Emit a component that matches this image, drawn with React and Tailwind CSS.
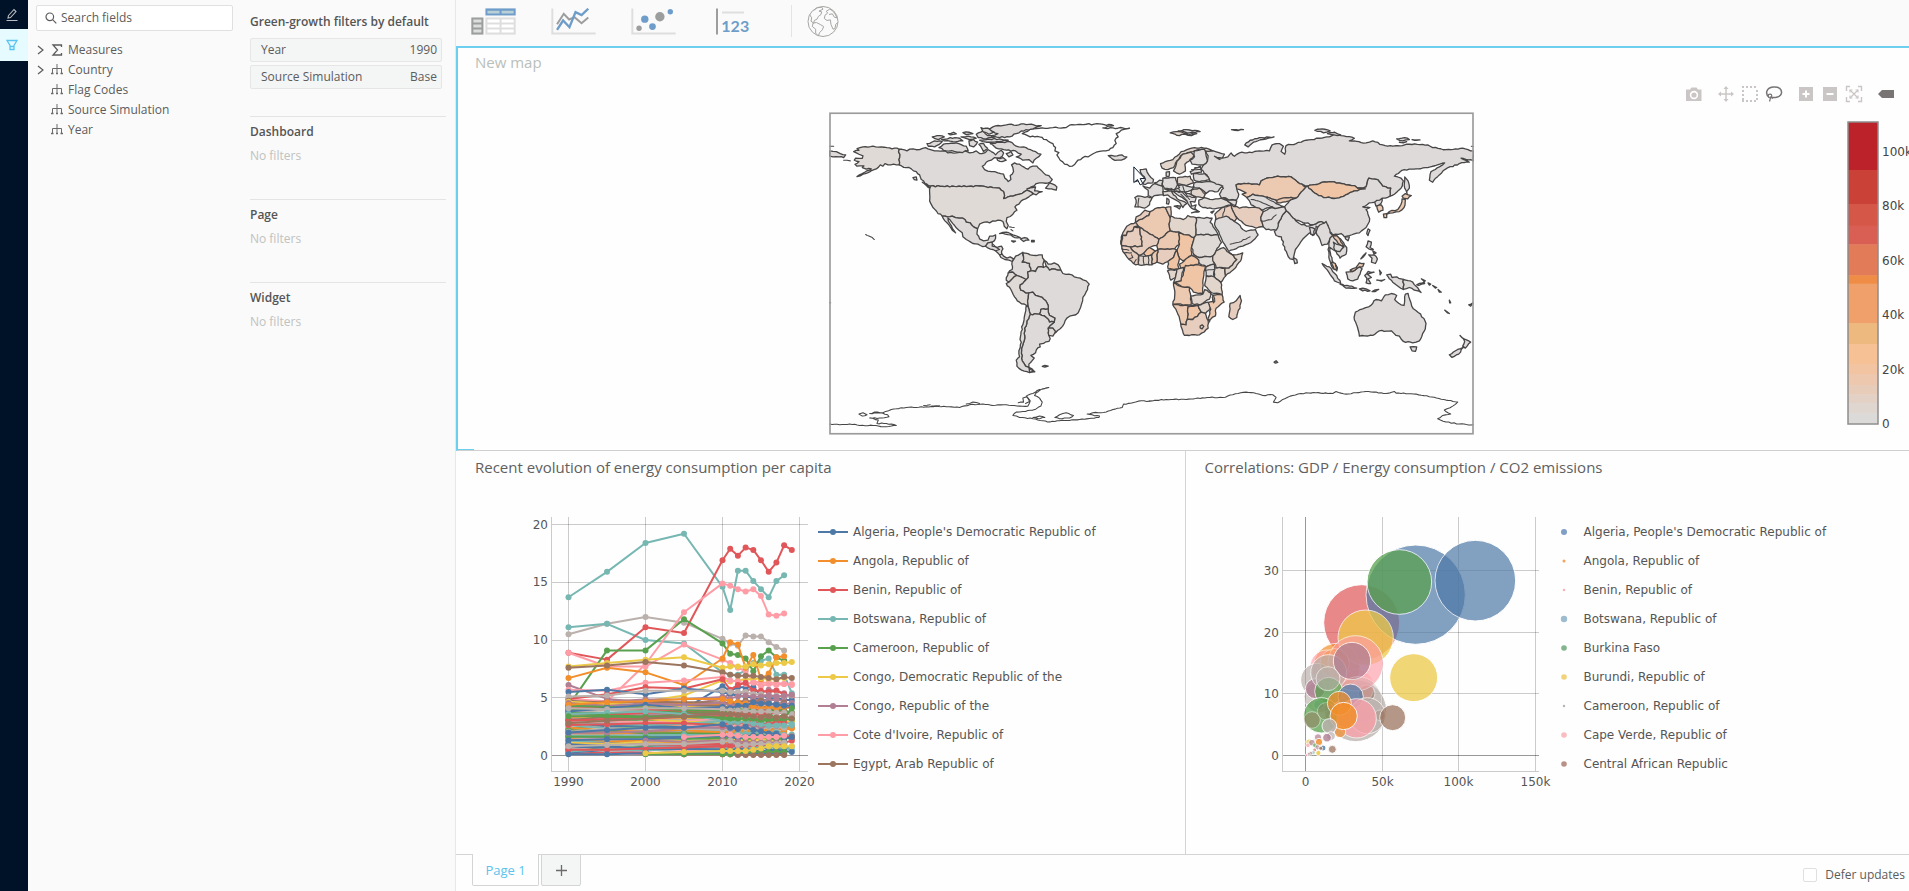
import React from "react";

/* ---------- world map ---------- */

const parse = (s) => s.trim().split(/\s+/).map((p) => p.split(",").map(Number));

// Adds coastline roughness; the offset depends only on the unordered pair of
// end points, so a border shared by two countries stays shared.
function rough(points, closed, amp) {
  const out = [];
  const n = points.length;
  const last = closed ? n : n - 1;
  for (let i = 0; i < last; i++) {
    const a = points[i];
    const b = points[(i + 1) % n];
    out.push(a);
    const flip = a[0] > b[0] || (a[0] === b[0] && a[1] > b[1]);
    const p = flip ? b : a;
    const q = flip ? a : b;
    const dx = q[0] - p[0];
    const dy = q[1] - p[1];
    const len = Math.hypot(dx, dy);
    const steps = Math.floor(len / 7);
    const mids = [];
    for (let k = 1; k < steps; k++) {
      const t = k / steps;
      const h = Math.sin(p[0] * 12.9 + p[1] * 78.2 + q[0] * 37.7 + q[1] * 11.3 + k * 91.7) * 43758.5;
      const o = (h - Math.floor(h) - 0.5) * 2 * amp;
      mids.push([p[0] + dx * t - (dy / len) * o, p[1] + dy * t + (dx / len) * o]);
    }
    if (flip) mids.reverse();
    out.push(...mids);
  }
  if (!closed) out.push(points[n - 1]);
  return out.map((p) => p[0].toFixed(1) + "," + p[1].toFixed(1)).join(" ");
}

const G = "#dddad9";
const A = "#dfdad6";
const B = "#e1d5cc";
const C = "#e7cdbe";
const D = "#ecc9b1";
const E = "#f0c5a5";

const WEST = [
  [A, "102,152 118,148 112,143 130,138 160,136 185,138 210,141 239,145 239,192 222,190 205,192 196,188 190,196 182,192 170,204 150,213 130,220 112,227 128,218 150,208 155,204 140,205 128,200 133,195 112,196 106,190 118,182 104,178 108,172 128,172 130,165 118,160"],
  [G, "30,150 50,152 62,158 78,162 72,170 58,168 40,168 30,166"],
  [G, "239,145 262,150 280,144 300,146 318,140 325,144 345,150 370,150 385,156 410,156 430,150 450,156 470,150 480,158 495,156 505,146 515,152 528,162 534,155 545,148 552,156 548,166 535,172 525,170 515,178 500,184 488,196 495,206 515,212 535,216 552,220 556,232 566,242 574,236 572,224 582,212 580,200 576,192 585,186 600,190 612,198 625,205 640,196 652,196 662,206 672,216 688,224 698,236 692,244 670,246 650,248 635,258 622,264 648,258 645,270 668,272 650,282 636,274 622,268 600,280 580,286 552,293 555,284 552,272 540,262 520,260 490,256 333,256 315,246 305,236 300,222 290,212 275,204 260,200 239,192"],
  [G, "678,262 690,246 700,250 712,258 710,268 696,264"],
  [G, "280,230 290,228 292,238 284,236"],
  [G, "308,244 322,250 338,262 326,260"],
  [A, "333,256 490,256 520,260 540,262 552,272 555,284 552,293 580,286 600,280 622,268 636,274 640,280 628,288 618,294 605,300 598,310 586,318 592,328 580,340 562,350 560,362 566,374 562,384 554,376 550,362 535,358 520,360 510,366 495,364 480,370 474,384 462,378 452,366 440,364 430,352 418,352 398,346 384,348 368,346 355,338 340,320 330,300 330,275"],
  [G, "368,346 384,348 398,346 418,352 430,352 440,364 452,366 462,378 474,384 472,400 480,414 492,420 505,418 510,406 528,402 528,412 518,424 505,426 498,436 482,434 460,428 440,416 430,408 428,396 418,388 405,374 395,362 385,352 386,360 396,376 408,396 398,388 388,372 376,360"],
  [G, "498,436 505,426 518,424 518,436 532,440 546,436 550,444 546,458 552,466 562,472 572,468 582,474 578,482 568,478 556,476 544,470 540,462 528,450 520,446 506,442"],
  [G, "540,398 560,394 580,402 602,410 585,410 565,401"],
  [G, "602,414 615,410 628,418 612,422"],
  [G, "636,419 644,419 644,423 636,423"],
  [G, "576,420 588,421 582,424"],
  [G, "578,482 588,466 604,458 610,454 612,468 608,484 630,488 634,510 624,514 626,530 620,545 604,528 592,524 580,514 566,516 578,506"],
  [A, "612,468 610,456 632,462 650,464 668,462 674,478 670,490 672,500 656,498 648,512 634,510 630,488 608,484"],
  [A, "566,516 580,514 592,524 578,534 568,544 560,538"],
  [A, "568,544 578,534 592,524 604,528 620,536 602,552 604,568 618,576 628,576 624,600 626,618 600,604 585,588 574,566 560,548"],
  [G, "674,478 686,490 704,486 716,492 724,508 714,508 698,504 690,508 680,496"],
  [G, "620,536 626,530 624,514 634,510 648,512 656,498 672,500 680,496 690,508 698,504 714,508 724,508 730,518 748,520 764,528 782,532 800,540 809,550 804,566 790,590 786,610 776,636 760,644 742,652 734,668 722,684 708,696 700,682 686,682 704,664 706,652 690,644 686,624 682,606 668,590 648,584 640,574 628,576 618,576 604,568 602,552"],
  [G, "628,576 640,574 648,584 668,590 682,606 686,624 664,626 660,640 632,640 626,618 624,600"],
  [G, "664,626 686,624 690,644 706,652 704,664 690,664 680,650 660,640"],
  [G, "632,640 660,640 680,650 690,664 704,664 686,682 688,704 692,714 688,722 672,728 660,730 662,738 650,748 648,756 634,764 644,772 636,782 628,790 628,800 618,796 608,780 606,750 614,720 616,690 622,660"],
  [A, "686,682 700,682 708,692 700,706 688,704"],
  [G, "626,618 632,640 622,660 616,690 614,720 606,750 608,780 618,796 628,800 644,812 630,816 606,808 592,796 590,778 600,768 598,750 602,740 604,700 614,650 620,615"],
  [G, "628,800 634,806 646,813 630,815"],
  [G, "668,797 676,794 686,796 676,799"],
  ["none", "640,84 660,82 700,80 740,80 750,73 800,70 840,69 882,74 850,81 895,82 930,82 905,88 890,98 896,108 886,118 890,128 880,140 868,148 850,150 830,154 812,164 790,170 775,178 766,190 758,196 735,190 722,178 712,162 718,155 706,150 708,140 700,128 680,116 660,108 632,108 608,98"],
  [G, "866,164 885,166 908,162 922,168 915,174 895,178 878,174"],
  [G, "505,86 520,78 560,72 620,71 665,74 640,84 605,90 590,98 570,108 540,110 515,104 535,98 520,92"],
  [G, "512,128 540,124 570,122 590,136 612,138 640,150 664,160 650,172 640,186 628,176 610,178 590,168 605,160 588,150 560,148 530,142"],
  [G, "358,140 380,128 410,126 440,136 446,150 420,154 380,150"],
  [G, "322,128 345,120 368,122 345,138 326,136"],
  [G, "448,120 462,116 474,124 462,138 450,134"],
  [G, "338,108 360,104 374,108 356,116"],
  [G, "366,116 392,110 420,112 430,120 400,122"],
  [G, "386,98 402,94 410,99 392,102"],
  [G, "430,95 448,94 460,98 440,101"],
  [G, "424,108 446,106 470,112 450,116"],
  [G, "470,100 490,90 504,104 526,108 500,114 476,110"],
  [G, "484,80 506,82 524,94 508,100 490,92"],
  [G, "480,118 500,116 540,114 566,118 540,122 500,124"],
  [G, "478,130 492,128 504,142 492,152"],
  [G, "532,172 550,170 560,178 548,182 534,178"],
  [G, "560,158 574,152 580,162 568,168"],
];

const EAST = [
  [G, "318,150 342,150 375,160 368,172 345,166 360,176 385,168 395,156 405,166 420,156 450,154 480,150 510,150 518,132 540,128 552,136 545,152 556,160 560,134 590,128 620,118 660,112 690,108 705,100 725,104 765,112 750,120 800,126 820,120 850,132 880,136 930,130 985,132 1000,140 1040,146 1090,142 1122,150 1122,180 1085,172 1110,184 1080,188 1040,204 1020,222 1000,244 990,238 995,212 1020,198 1036,186 985,200 950,204 915,206 885,226 905,232 912,240 905,262 885,280 872,286 874,262 850,256 835,236 808,232 800,258 775,262 765,254 740,252 690,242 660,248 625,256 600,248 575,228 535,226 510,230 485,240 480,252 440,248 410,252 412,264 418,280 412,296 390,298 365,290 360,280 372,262 345,248 330,238 322,222 305,205 312,192 324,180 326,165"],
  [D, "410,252 440,248 480,252 485,240 510,230 535,226 575,228 600,248 620,258 600,280 590,292 560,290 540,300 490,286 460,280 442,290 428,280 440,276 428,270 412,264"],
  [G, "442,290 460,280 490,286 540,300 530,308 555,318 535,322 510,320 490,328 455,312 450,300"],
  [D, "530,300 560,290 590,292 570,300 550,304 536,306"],
  [E, "625,256 660,248 690,242 740,252 765,254 775,262 798,264 765,270 745,280 712,292 672,290 640,272"],
  [G, "625,256 640,272 672,290 712,292 745,280 765,270 798,264 775,262 800,258 808,232 835,236 850,256 874,262 872,286 850,292 838,302 810,306 790,318 812,320 800,326 808,346 810,362 800,380 780,396 750,404 735,408 725,398 700,402 690,392 685,372 665,362 640,372 610,370 590,360 575,345 560,330 555,318 570,300 590,292 600,280 620,258"],
  [G, "540,360 560,330 575,345 590,360 610,370 640,372 665,362 680,368 665,384 650,376 650,394 640,404 630,396 615,410 600,430 588,446 582,476 572,474 556,446 546,408 530,404 525,392"],
  ["#fdfdfd", "588,358 604,362 640,372 628,376 600,368"],
  [G, "630,380 646,384 644,402 634,400"],
  [G, "650,394 656,378 680,362 688,380 692,396 700,404 692,412 684,430 668,434 658,408"],
  [G, "692,412 706,402 728,420 742,440 740,460 722,472 710,452 700,446 692,440 694,464 702,486 714,500 712,510 700,502 690,476 686,446"],
  [D, "700,406 712,404 730,430 734,438 722,432 712,420"],
  [D, "694,484 708,488 714,504 704,506"],
  [G, "702,424 720,432 732,440 722,452 706,448"],
  [G, "738,408 750,408 746,420 738,414"],
  [G, "806,384 812,388 806,404 802,398"],
  [G, "806,420 816,424 812,440 822,446 808,444 800,438"],
  [G, "808,462 824,462 834,474 828,488 816,484 818,472"],
  [G, "820,450 830,456 824,460"],
  [G, "784,474 792,464 800,456 790,470"],
  [G, "740,514 760,512 780,498 788,504 782,520 775,535 760,540 745,534"],
  [D, "752,508 770,500 780,486 794,488 790,498 780,498 760,512"],
  [G, "668,488 690,498 712,524 724,548 705,540 688,514"],
  [G, "722,550 750,556 772,562 740,562"],
  [G, "780,564 800,564 812,570 790,570"],
  [G, "818,572 838,566 828,572"],
  [G, "796,524 806,512 824,514 804,520 816,530 806,534 814,548 800,546 802,532"],
  [G, "840,508 846,516 842,522"],
  [G, "832,538 856,536 846,541"],
  [G, "862,522 874,520 878,530 892,528 912,536 912,566 890,552 880,544 870,534"],
  [G, "912,536 940,544 950,556 965,575 945,568 930,560 912,566"],
  [G, "952,552 970,546 978,540 966,534 976,548 958,554"],
  [G, "986,546 994,550 990,553"],
  [G, "1000,554 1012,560 1008,562"],
  [G, "1016,566 1026,574 1020,574"],
  [G, "1050,598 1054,606 1051,606"],
  [G, "1036,628 1050,638 1044,636"],
  [G, "1108,612 1121,606 1114,616"],
  [G, "768,634 790,624 808,618 830,596 846,600 858,582 876,578 892,584 886,596 905,612 914,614 918,580 926,578 932,598 942,624 964,640 980,668 974,692 960,720 940,726 912,722 900,706 890,704 876,690 840,690 820,704 780,706 776,686 764,650"],
  [G, "932,738 952,738 948,752 938,750"],
  [G, "1082,704 1098,716 1114,724 1098,742 1090,736 1096,722"],
  [G, "1092,740 1078,760 1058,770 1050,762 1075,746"],
  [G, "916,228 926,240 930,262 922,272 924,284 916,262"],
  [D, "908,286 918,278 936,284 925,294 912,292"],
  [D, "862,340 870,332 895,326 905,310 908,294 918,296 914,320 900,332 880,336"],
  [D, "852,340 862,338 862,350 854,350"],
  [G, "826,304 848,292 846,306 838,314 830,316"],
  [D, "832,316 846,312 851,328 838,334"],
  [C, "395,312 420,322 440,318 480,322 492,332 484,350 492,378 470,382 450,376 432,368 412,350 400,330"],
  [G, "484,350 492,332 510,322 535,322 555,318 560,330 540,360 530,388 500,386 492,378"],
  [G, "350,348 380,346 405,362 422,374 430,386 440,392 468,386 476,402 460,420 430,436 388,452 375,430 360,400 345,370"],
  [C, "365,322 395,312 400,330 412,352 405,362 380,346 350,356 346,340"],
  [A, "298,298 315,290 340,296 365,292 390,300 395,312 365,320 345,324 310,320 298,310"],
  [G, "372,290 392,298 412,300 408,314 392,306"],
  [B, "212,345 232,352 252,356 265,344 290,350 290,402 284,410 238,394 212,390 208,370"],
  [G, "290,350 338,352 332,364 346,384 356,402 290,402"],
  [C, "108,364 110,348 128,336 136,328 152,332 148,344"],
  [C, "64,430 68,402 82,376 108,364 118,378 104,378 100,390 84,392 80,404 68,404"],
  [D, "152,332 175,320 198,320 206,338 212,350 208,370 212,390 178,416 122,380 108,364 148,344"],
  [C, "198,320 214,318 215,332 212,350 206,338"],
  [C, "68,404 80,404 84,392 100,390 104,378 122,380 128,436 92,438 66,434"],
  [C, "122,380 178,416 172,434 150,440 135,456 118,464 100,450 92,438 128,436"],
  [D, "178,416 212,390 238,394 240,430 225,444 175,446 172,434"],
  [E, "238,394 284,410 276,440 276,464 250,480 240,472 232,448 240,430"],
  [A, "290,402 356,402 366,425 350,450 340,466 300,470 284,462 276,440 284,410"],
  [A, "284,462 300,470 340,466 345,490 320,498 300,488 276,464"],
  [B, "350,450 372,440 390,456 412,476 388,502 350,500 340,480 340,466"],
  [B, "390,456 404,462 430,456 426,474 405,504 378,526 376,502 388,502 412,476"],
  [B, "344,500 376,502 378,526 364,545 344,528"],
  [G, "320,498 345,490 344,528 320,524"],
  [C, "175,446 225,444 232,448 222,470 205,482 190,490 172,484"],
  [E, "132,458 150,440 172,452 155,462 140,466"],
  [C, "66,434 92,438 100,450 118,464 118,490 108,492 95,480 82,468 70,452"],
  [B, "118,464 140,466 158,462 158,492 118,492"],
  [D, "158,460 175,446 172,484 158,490"],
  [E, "232,448 240,472 235,492 240,506 206,504 205,482 222,470"],
  [E, "240,490 276,464 298,478 298,490 265,496 245,504"],
  [B, "204,510 232,506 228,530 214,538"],
  [B, "232,506 252,500 245,540 222,546 228,530"],
  [E, "258,494 298,492 318,496 312,530 310,578 282,574 270,560 248,558 226,546 245,540 252,515"],
  [B, "320,526 344,528 364,545 368,582 335,575 316,555"],
  [D, "222,546 248,558 270,560 274,586 275,612 220,610 226,580"],
  [B, "274,586 310,580 316,566 335,575 330,595 300,612 278,608"],
  [D, "340,583 368,582 374,604 350,622 348,645 326,660 334,625 324,606 340,602"],
  [D, "220,612 296,614 266,618 264,655 260,672 244,670 235,640"],
  [E, "266,618 296,614 305,634 280,656 264,655"],
  [B, "296,614 326,604 332,622 318,638 305,634"],
  [C, "244,670 260,672 264,655 280,656 305,634 318,638 326,660 326,682 300,702 255,704"],
  [B, "302,676 308,672 313,677 308,684 302,681"],
  [C, "422,584 426,600 412,650 400,656 388,648 392,608 410,600"],
  [G, "582,470 592,476 594,486 586,488"],
  [B, "183,188 220,176 245,152 285,140 320,142 340,150 318,150 296,146 280,152 250,160 232,180 222,200 205,206 188,202"],
  [B, "250,160 275,154 284,164 256,190 258,210 240,220 222,210 232,182"],
  [G, "285,150 315,145 324,180 312,192 278,190 272,178 285,168"],
  [G, "122,206 140,204 148,222 162,236 160,246 130,250 138,236 128,222"],
  [G, "106,230 118,226 120,238 108,242"],
  [A, "106,290 115,285 158,290 150,312 135,322 106,318 110,306"],
  [G, "130,255 150,262 165,248 188,254 192,282 165,284 158,290 146,284 146,268"],
  [G, "165,246 180,238 192,240 188,256 176,252"],
  [G, "190,232 228,230 234,252 225,266 195,262 188,250"],
  [G, "200,214 210,212 208,228 200,226"],
  [B, "234,230 272,226 282,246 260,254 234,248"],
  [G, "272,212 302,196 306,214 276,220"],
  [G, "282,218 316,218 330,236 300,242 284,238"],
  [G, "284,246 330,242 370,256 355,272 330,270 320,278 300,262 282,260"],
  [G, "195,264 225,266 240,260 234,250 262,256 284,258 276,268 256,274 240,272 210,272"],
  [B, "276,268 300,262 318,276 312,290 290,288 276,282"],
  [G, "222,272 256,274 276,282 290,290 286,304 272,302 276,316 290,312 286,322 298,332 276,322 262,300 240,286"],
  [A, "190,272 215,270 222,282 240,298 262,308 250,320 240,304 218,292 205,282 192,284"],
  [A, "224,316 244,316 240,324"],
  [A, "202,292 208,296 207,310 201,308"],
  [G, "276,336 300,332 296,334"],
  [G, "334,334 344,330 338,337"],
  [B, "212,96 232,92 262,96 240,104"],
  [G, "236,90 262,86 302,92 270,96"],
  [G, "256,100 292,98 276,104"],
  [G, "396,86 432,86 416,89"],
  [G, "436,132 452,118 480,110 524,108 490,116 462,124 446,138"],
  [G, "646,88 668,84 692,90 672,96"],
  [G, "684,98 706,94 724,102 704,102"],
  [G, "892,114 916,110 930,116 910,120"],
  [G, "938,116 962,117 950,118"],
  [G, "900,124 922,122 912,126"],
  [G, "524,784 530,780 535,785 528,787"],
];

const WEST_LINES = [
  "30,970 60,972 90,970 120,974 160,974 200,978 230,974 200,968 172,968 176,958 150,952 180,952 208,948 204,942 180,936 150,938 165,934 190,936 215,926 260,920 320,918 350,916 380,918 420,920 450,912 490,910 520,914 560,912 600,916 625,916 632,900 620,886 640,878 660,866 688,860 670,864 650,876 645,884 660,892 668,904 664,916 640,928 610,932 590,934 580,944 600,950 640,954 670,960 684,964 720,960 780,956 838,950 840,946 803,940 820,936 860,934 880,926 908,920 912,910 940,906 965,900 990,901",
  "118,940 130,936 142,942 128,946 118,940",
  "706,950 720,942 740,936 762,944 750,952 720,954 706,950",
  "640,950 660,946 676,950 655,954 640,950",
  "596,906 612,904 610,892 622,888 630,902 618,908",
  "440,910 460,904 480,908",
  "312,914 332,912",
  "336,916 360,915",
  "138,401 143,404",
  "146,405 158,410 164,416",
  "30,136 42,136",
  "30,606 33,606",
  "570,378 584,380",
  "574,386 580,390",
  "72,178 92,180",
  "520,430 540,446 528,450",
  "548,460 540,462",
];

const EAST_LINES = [
  "150,901 200,896 260,896 330,890 370,890 400,882 440,874 470,878 490,884 520,882 530,890 522,904 535,906 550,896 580,884 620,876 700,878 710,872 740,880 800,872 860,878 885,872 890,877 950,880 990,888 1040,898 1075,904 1060,916 1035,928 1054,940 1030,944 1015,954 1040,964 1080,970 1122,972",
  "118,292 116,318",
  "132,466 134,492",
  "146,464 148,492",
  "96,462 100,470 90,474",
  "110,476 104,486",
  "66,444 88,448",
  "74,456 96,456",
  "392,430 418,424 452,408",
  "530,342 516,356 498,360 484,360",
  "455,296 476,300 500,310 520,318",
  "500,290 515,300 530,308",
  "236,262 250,276 262,288",
  "250,256 256,274 270,296",
  "262,286 286,290",
  "244,280 262,300",
  "276,206 304,206",
  "286,200 304,198",
  "214,262 226,270",
  "330,574 342,584 346,602 342,606 338,590",
  "320,508 344,506",
  "326,656 332,660 328,666",
  "376,322 370,346",
  "300,262 316,280",
  "1116,136 1122,137",
];

function WorldMap() {
  return (
    <svg viewBox="28 34 1936 968" className="block h-[323px] w-[645px] shrink-0" role="img" aria-label="World map">
      <g stroke="#474545" strokeWidth="3.9" strokeLinejoin="round" strokeLinecap="round">
        <g>
          {WEST.map(([fill, pts], i) => (
            <polygon key={i} fill={fill} points={rough(parse(pts), true, 2.4)} />
          ))}
          {WEST_LINES.map((pts, i) => (
            <polyline key={i} fill="none" strokeWidth="3.2" points={rough(parse(pts), false, 1.4)} />
          ))}
        </g>
        <g transform="translate(840 0)">
          {EAST.map(([fill, pts], i) => (
            <polygon key={i} fill={fill} points={rough(parse(pts), true, 2)} />
          ))}
          {EAST_LINES.map((pts, i) => (
            <polyline key={i} fill="none" strokeWidth="3.2" points={rough(parse(pts), false, 1.4)} />
          ))}
        </g>
      </g>
      <rect x="31" y="37" width="1930" height="962" fill="none" stroke="#9b9b9b" strokeWidth="5" />
      <path
        transform="translate(943 198)"
        d="M0 0V47L11 38L19 54L27 50L19 35H33Z"
        fill="#fff"
        stroke="#0b1a2e"
        strokeWidth="3"
      />
    </svg>
  );
}

/* ---------- palette ---------- */

const BLUE = "#4e79a7";
const ORANGE = "#f28e2b";
const RED = "#e15759";
const TEAL = "#76b7b2";
const GREEN = "#59a14f";
const YELLOW = "#edc948";
const MAUVE = "#b07f93";
const PINK = "#ff9da7";
const BROWN = "#9c755f";
const GREY = "#bab0ac";
const PALETTE = [BLUE, ORANGE, RED, TEAL, GREEN, YELLOW, MAUVE, PINK, BROWN, GREY];

/* ---------- line chart ---------- */

const YEARS = [1990, 1995, 2000, 2005, 2010, 2011, 2012, 2013, 2014, 2015, 2016, 2017, 2018, 2019];

const SERIES = [
  [TEAL, [13.7, 15.9, 18.4, 19.2, 14.6, 12.6, 16.0, 16.0, 15.1, 14.4, 13.7, 15.1, 15.6]],
  [GREY, [10.5, 11.4, 12.0, 11.5, 10.1, 9.7, 9.5, 10.4, 10.3, 10.3, 9.8, 9.4, 9.1]],
  [TEAL, [11.1, 11.4, 10.0, 9.7, 7.2, 7.0, 7.0, 7.4, 8.0, 8.2, 8.4, 7.0, 7.0, 5.4]],
  [RED, [8.9, 8.3, 11.1, 10.6, 16.9, 17.9, 17.3, 18.0, 17.8, 16.9, 15.9, 16.7, 18.2, 17.8]],
  [PINK, [8.9, 7.7, 7.7, 9.6, 8.3, 8.0, 7.6, 7.3, 6.4, 6.3, 6.3, 6.3, 6.2, 6.2]],
  [GREEN, [4.3, 9.1, 9.1, 11.8, 9.7, 8.8, 8.7, 8.4, 7.3, 8.6, 9.1, 8.5, 8.2]],
  [PINK, [4.9, 4.7, 7.9, 12.4, 14.9, 14.7, 14.4, 14.2, 14.4, 13.8, 12.2, 12.1, 12.3]],
  [ORANGE, [6.7, 7.6, 7.2, 6.1, 8.4, 9.8, 9.6, 7.6, 8.7, 6.6, 7.1, 8.5, 8.6]],
  [YELLOW, [3.2, 4.5, 4.7, 5.2, 6.5, 6.4, 6.5, 6.6, 6.6, 6.7, 6.6, 6.6, 6.7]],
  [YELLOW, [7.7, 8.0, 8.3, 8.5, 7.6, 7.7, 7.7, 7.7, 7.9, 7.8, 7.9, 8.0, 8.0, 8.1]],
  [BROWN, [7.6, 7.8, 8.1, 7.8, 7.2, 7.0, 6.9, 6.9, 6.9, 6.8, 6.7, 6.6, 6.8, 6.7]],
  [MAUVE, [6.1, 4.9, 4.6, 4.4, 4.9, 5.4, 5.2, 5.6, 5.8, 5.4, 5.7, 5.6, 5.4]],
  [BLUE, [3.9, 4.0, 4.2, 4.0, 6.0, 5.6, 5.9, 5.9, 5.9, 5.2, 5.0, 4.9, 4.9]],
  [PINK, [5.7, 5.6, 6.3, 6.5, 6.8, 6.5, 6.4, 6.2, 6.3, 6.0, 6.2, 6.1, 6.2, 6.1]],
  [RED, [4.9, 5.3, 5.9, 5.8, 6.6, 5.7, 6.1, 6.3, 5.6, 5.6, 5.5, 5.6, 5.3, 5.1]],
  [BLUE, [5.5, 5.7, 5.3, 5.8, 5.5, 5.3, 5.2, 5.1, 5.0, 4.8, 4.8, 4.9, 4.8, 4.8]],
  [GREY, [5.1, 5.2, 5.6, 5.6, 5.6, 5.5, 5.5, 5.5, 5.3, 5.3, 5.2, 5.2, 5.1, 5.2]],
];

// Low-consumption countries, packed between 0 and 5.
const BAND_ORDER = [1, 2, 9, 3, 8, 0, 4, 6, 7, 5];
for (let i = 0; i < 78; i++) {
  const r = (k) => {
    const h = Math.sin((i + 1) * 127.1 + k * 311.7) * 43758.5453;
    return h - Math.floor(h);
  };
  const base = 0.25 + ((i * 29) % 78) * 0.057;
  const color = PALETTE[BAND_ORDER[(i * 7 + Math.floor(r(0) * 5)) % 10]];
  const slope = (r(1) - 0.5) * 1.5;
  SERIES.push([
    color,
    YEARS.slice(0, r(2) > 0.65 ? 14 : 13).map((y, k) =>
      Math.max(0.1, base + (slope * (y - 1990)) / 29 + (r(k + 5) - 0.5) * 0.3)
    ),
  ]);
}
SERIES.push(
  [ORANGE, [4.4, 4.6, 4.7, 4.9, 4.9, 4.7, 4.6, 4.5, 4.2, 4.1, 4.2, 4.1, 4.2]],
  [BLUE, [3.8, 4.1, 4.4, 4.1, 4.2, 4.1, 4.3, 4.3, 4.6, 4.5, 4.5, 4.4, 4.3, 4.3]],
  [GREY, [4.1, 4.0, 4.1, 4.1, 4.0, 3.9, 3.9, 3.9, 3.8, 3.8, 3.8, 3.7, 3.7, 3.6]],
  [TEAL, [3.6, 3.7, 3.8, 3.6, 3.0, 2.9, 2.9, 2.9, 2.8, 2.7, 2.6, 2.6, 2.6, 2.6]],
  [GREEN, [3.4, 3.4, 3.3, 3.4, 3.3, 3.2, 3.2, 3.2, 3.2, 3.1, 3.2, 3.2, 3.2, 4.1]],
  [BROWN, [2.8, 3.0, 3.2, 3.4, 3.6, 3.6, 3.5, 3.4, 3.4, 3.3, 3.4, 3.3, 3.4, 3.2]],
  [BLUE, [2.0, 2.2, 2.4, 2.4, 2.7, 2.4, 2.3, 2.5, 2.2, 2.1, 1.9, 1.9, 1.6]],
  [MAUVE, [null, null, 1.3, 1.2, 1.3, 1.3, 1.2, 1.1, 1.1, 1.1, 1.1, 1.1, 1.0]],
  [PINK, [null, null, null, 1.6, 1.8, 1.8, 1.7, 1.6, 1.6, 1.6, 1.6, 1.6, 1.7]],
  [RED, [0.5, 0.5, 0.6, 0.7, 0.8, 0.8, 0.8, 0.8, 0.9, 0.9, 1.0, 1.0, 1.0]],
  [GREY, [0.8, 0.9, 1.0, 1.0, 1.2, 1.3, 0.9, 0.9, 1.0, 1.0, 1.0, 1.0, 1.1]],
  [BLUE, [0.1, 0.1, 0.2, 0.2, 0.2, 0.2, 0.2, 0.2, 0.2, 0.2, 0.2, 0.2, 0.2]],
  [GREEN, [null, null, 0.1, 0.1, 0.1, 0.1, 0.2, 0.3, 0.3, 0.3, 0.3, 0.3, 0.3]],
  [BROWN, [null, null, null, null, null, null, 0.05, 0.05, 0.05, 0.05, 0.05, 0.05, 0.05]],
  [YELLOW, [null, null, 0.2, 0.3, 0.4, 0.4, 0.4, 0.4, 0.5, 0.6, 0.8, 0.8, 0.8, 0.8]]
);

const lineX = (year) => 38.5 + (year - 1990) * 7.7;
const lineY = (v) => 255.5 - v * 11.55;

function LineChart() {
  return (
    <svg width="288" height="300" className="block shrink-0" role="img" aria-label="Energy consumption per capita over time">
      <g stroke="#000" strokeOpacity="0.2" shapeRendering="crispEdges">
        {[1990, 2000, 2010, 2020].map((y) => (
          <line key={y} x1={lineX(y)} x2={lineX(y)} y1="17" y2="271" />
        ))}
        {[5, 10, 15, 20].map((v) => (
          <line key={v} x1="22" x2="278" y1={lineY(v)} y2={lineY(v)} />
        ))}
        <line x1="21.5" x2="21.5" y1="17" y2="271" />
        <line x1="21" x2="278" y1="271.5" y2="271.5" />
        <line x1="22" x2="278" y1="255.5" y2="255.5" strokeOpacity="0.4" />
      </g>
      {SERIES.map(([color, values], i) => {
        const pts = values
          .map((v, k) => (v === null ? null : [lineX(YEARS[k]), lineY(v)]))
          .filter(Boolean);
        return (
          <g key={i}>
            <polyline
              fill="none"
              stroke={color}
              strokeWidth="2"
              strokeLinejoin="round"
              points={pts.map((p) => p.join(",")).join(" ")}
            />
            {pts.map((p, k) => (
              <circle key={k} cx={p[0]} cy={p[1]} r="3" fill={color} />
            ))}
          </g>
        );
      })}
      <g fill="#555" fontSize="12" className="font-['DejaVu_Sans',sans-serif]">
        {[0, 5, 10, 15, 20].map((v) => (
          <text key={v} x="18" y={lineY(v) + 4} textAnchor="end">{v}</text>
        ))}
        {[1990, 2000, 2010, 2020].map((y) => (
          <text key={y} x={lineX(y)} y="286" textAnchor="middle">{y}</text>
        ))}
      </g>
    </svg>
  );
}

/* ---------- bubble chart ---------- */

// [x, y, radius, colour, opacity] in thirds of a pixel
const BUBBLES = [
  [335, 368, 114, RED, 0.7],
  [497, 284, 149, BLUE, 0.7],
  [317, 632, 93, GREY, 0.75],
  [448, 246, 97, GREEN, 0.75],
  [676, 242, 121, BLUE, 0.7],
  [260, 500, 70, ORANGE, 0.7],
  [230, 500, 50, PINK, 0.6],
  [202, 540, 50, GREY, 0.7],
  [210, 590, 48, GREY, 0.6],
  [196, 566, 30, MAUVE, 0.8],
  [350, 580, 25, BROWN, 0.8],
  [320, 560, 52, PINK, 0.4],
  [347, 413, 83, YELLOW, 0.75],
  [317, 490, 83, PINK, 0.65],
  [254, 490, 44, ORANGE, 0.35],
  [236, 518, 54, GREY, 0.7],
  [306, 483, 56, MAUVE, 0.75],
  [491, 533, 72, YELLOW, 0.75],
  [325, 600, 70, GREY, 0.3],
  [236, 574, 42, GREEN, 0.7],
  [234, 536, 36, GREY, 0.6],
  [302, 590, 38, BLUE, 0.7],
  [352, 647, 54, GREY, 0.7],
  [390, 646, 16, BROWN, 0.3],
  [206, 614, 15, TEAL, 0.6],
  [214, 646, 53, GREEN, 0.75],
  [186, 660, 25, BROWN, 0.45],
  [228, 634, 26, BROWN, 0.35],
  [320, 655, 59, PINK, 0.7],
  [268, 610, 36, ORANGE, 0.75],
  [270, 696, 17, ORANGE, 0.7],
  [281, 648, 41, ORANGE, 0.85],
  [428, 653, 39, BROWN, 0.75],
  [238, 678, 22, GREY, 0.85],
  [243, 708, 13, GREY, 0.7],
  [231, 713, 13, MAUVE, 0.8],
  [204, 712, 11, MAUVE, 0.7],
  [176, 726, 9, YELLOW, 0.7],
  [174, 736, 7, PINK, 0.7],
  [186, 728, 10, MAUVE, 0.7],
  [196, 736, 8, GREEN, 0.7],
  [207, 726, 11, ORANGE, 0.85],
  [203, 742, 8, MAUVE, 0.6],
  [219, 744, 9, BLUE, 0.8],
  [212, 745, 6, BROWN, 0.8],
  [247, 748, 12, BROWN, 0.75],
  [205, 759, 8, YELLOW, 0.85],
  [194, 750, 6, RED, 0.6],
  [190, 758, 6, TEAL, 0.6],
  [182, 760, 6, BROWN, 0.6],
  [176, 762, 5, MAUVE, 0.6],
  [170, 765, 4, PINK, 0.7],
];

function BubbleChart() {
  return (
    <svg width="302" height="300" className="block shrink-0" role="img" aria-label="GDP, energy consumption and CO2 emissions">
      <g stroke="#000" strokeOpacity="0.2" shapeRendering="crispEdges">
        {[132.5, 208.5, 285.5].map((x) => (
          <line key={x} x1={x} x2={x} y1="17" y2="271" />
        ))}
        {[70.5, 132.5, 193.5].map((y) => (
          <line key={y} x1="33" x2="289" y1={y} y2={y} />
        ))}
        <line x1="32.5" x2="32.5" y1="17" y2="271" />
        <line x1="32" x2="289" y1="271.5" y2="271.5" />
        <line x1="33" x2="289" y1="255.5" y2="255.5" strokeOpacity="0.4" />
        <line x1="55.5" x2="55.5" y1="17" y2="271" strokeOpacity="0.4" />
      </g>
      {BUBBLES.map(([x, y, r, color, o], i) => (
        <circle key={i} cx={x / 3} cy={y / 3} r={r / 3} fill={color} stroke="#fff" strokeWidth="1" opacity={o} />
      ))}
      <g fill="#555" fontSize="12" className="font-['DejaVu_Sans',sans-serif]">
        {[[0, 255.5], [10, 193.5], [20, 132.5], [30, 70.5]].map(([v, y]) => (
          <text key={v} x="29" y={y + 4} textAnchor="end">{v}</text>
        ))}
        {[["0", 55.5], ["50k", 132.5], ["100k", 208.5], ["150k", 285.5]].map(([t, x]) => (
          <text key={t} x={x} y="286" textAnchor="middle">{t}</text>
        ))}
      </g>
    </svg>
  );
}

/* ---------- legends ---------- */

const LINE_LEGEND = [
  ["Algeria, People's Democratic Republic of", BLUE],
  ["Angola, Republic of", ORANGE],
  ["Benin, Republic of", RED],
  ["Botswana, Republic of", TEAL],
  ["Cameroon, Republic of", GREEN],
  ["Congo, Democratic Republic of the", YELLOW],
  ["Congo, Republic of the", MAUVE],
  ["Cote d'Ivoire, Republic of", PINK],
  ["Egypt, Arab Republic of", BROWN],
];

const BUBBLE_LEGEND = [
  ["Algeria, People's Democratic Republic of", "#7f9fc4", 3],
  ["Angola, Republic of", "#f6a35c", 1.5],
  ["Benin, Republic of", "#f3b6b4", 1.3],
  ["Botswana, Republic of", "#9dbccf", 3.2],
  ["Burkina Faso", "#83b58d", 2.8],
  ["Burundi, Republic of", "#f0d37a", 2.8],
  ["Cameroon, Republic of", "#b4b2b2", 1.2],
  ["Cape Verde, Republic of", "#fbbcc0", 2.8],
  ["Central African Republic", "#ba9186", 2.8],
];

const legendText = "font-['DejaVu_Sans',sans-serif] text-xs whitespace-nowrap text-[#555]";

function LineLegend() {
  return (
    <ul className="mt-[17px]">
      {LINE_LEGEND.map(([name, color]) => (
        <li key={name} className="flex h-[29px] items-center gap-[5px]">
          <svg width="30" height="6" className="shrink-0" aria-hidden="true">
            <line x1="0" x2="30" y1="3" y2="3" stroke={color} strokeWidth="2" />
            <circle cx="15" cy="3" r="3" fill={color} />
          </svg>
          <span className={legendText}>{name}</span>
        </li>
      ))}
    </ul>
  );
}

function BubbleLegend() {
  return (
    <ul className="mt-[17px]">
      {BUBBLE_LEGEND.map(([name, color, r]) => (
        <li key={name} className="flex h-[29px] items-center gap-2">
          <svg width="24" height="8" className="shrink-0" aria-hidden="true">
            <circle cx="12" cy="4" r={r} fill={color} />
          </svg>
          <span className={legendText}>{name}</span>
        </li>
      ))}
    </ul>
  );
}

/* ---------- colour scale ---------- */

const SCALE = [
  [186, 330, "#bc2229"],
  [330, 432, "#ca4237"],
  [432, 497, "#d55748"],
  [497, 553, "#d95f54"],
  [553, 646, "#e17b58"],
  [646, 671, "#ef8d46"],
  [671, 790, "#f0a06b"],
  [790, 852, "#edb97f"],
  [852, 912, "#f6c195"],
  [912, 942, "#f2c4a2"],
  [942, 975, "#edc8ae"],
  [975, 1003, "#e8ccba"],
  [1003, 1030, "#e3d1c5"],
  [1030, 1060, "#dfd6d0"],
  [1060, 1090, "#dcd9d9"],
];

function ColorScale() {
  return (
    <svg width="62" height="323" className="block shrink-0" role="img" aria-label="Colour scale">
      {SCALE.map(([y0, y1, color]) => (
        <rect key={y0} x="1" width="30" y={y0 / 3 - 52} height={(y1 - y0) / 3 + 0.5} fill={color} />
      ))}
      <rect x="1" y="10" width="30" height="302" fill="none" stroke="#8f8c8c" strokeWidth="1.5" />
      <g fill="#444" fontSize="12" className="font-['DejaVu_Sans',sans-serif]">
        {["100k", "80k", "60k", "40k", "20k", "0"].map((t, i) => (
          <text key={t} x="35" y={44 + i * 54.4}>{t}</text>
        ))}
      </g>
    </svg>
  );
}

/* ---------- icons ---------- */

function TableIcon() {
  return (
    <svg viewBox="92 23 134 80" className="block h-[27px] w-[45px]" aria-hidden="true">
      <rect x="135" y="24" width="90" height="21" fill="#6f9dc9" />
      <path d="M141 31h36v8h-36zM183 31h36v8h-36z" fill="#b9d0d8" />
      <rect x="93" y="51" width="36" height="51" fill="#9c9d9d" />
      <path d="M99 57h24v9H99zM99 72h24v9H99zM99 87h24v9H99z" fill="#dcdddd" />
      <rect x="135" y="51" width="90" height="51" fill="#dedede" />
      <path d="M141 57h36v9h-36zM183 57h36v9h-36zM141 72h36v9h-36zM183 72h36v9h-36zM141 87h36v9h-36zM183 87h36v9h-36z" fill="#fff" />
    </svg>
  );
}

function LinesIcon() {
  return (
    <svg viewBox="332 23 134 80" className="block h-[27px] w-[45px]" fill="none" aria-hidden="true">
      <path d="M336 24V99H465" stroke="#dedede" strokeWidth="6" />
      <path d="M350 71L370 40L386 57L402 50L423 68L443 51" stroke="#9c9d9d" strokeWidth="6" />
      <path d="M350 88L368 60L387 80L405 35L423 44L443 25" stroke="#6f9dc9" strokeWidth="7" />
    </svg>
  );
}

function ScatterIcon() {
  return (
    <svg viewBox="572 23 134 80" className="block h-[27px] w-[45px]" aria-hidden="true">
      <path d="M576 24V99H705" stroke="#dedede" strokeWidth="6" fill="none" />
      <circle cx="613" cy="56" r="11" fill="#6f9dc9" />
      <circle cx="636" cy="78" r="10" fill="#6f9dc9" />
      <circle cx="689" cy="34" r="8" fill="#6f9dc9" />
      <circle cx="658" cy="49" r="14" fill="#9c9d9d" />
      <circle cx="596" cy="83" r="8" fill="#9c9d9d" />
    </svg>
  );
}

function NumberIcon() {
  return (
    <svg viewBox="828 23 102 80" className="block h-[27px] w-[34px]" aria-hidden="true">
      <rect x="828" y="24" width="6" height="78" fill="#9c9d9d" />
      <rect x="846" y="33" width="66" height="6" fill="#dedede" />
      <text x="844" y="93" fontSize="48" fontWeight="700" fill="#6f9dc9" className="font-[Lato,sans-serif]">123</text>
    </svg>
  );
}

function GlobeIcon() {
  return (
    <svg viewBox="1100 14 96 98" className="block h-[33px] w-[32px]" fill="none" stroke="#a7a6a4" strokeWidth="3" strokeLinejoin="round" aria-hidden="true">
      <circle cx="1148" cy="63" r="45" />
      <path d="M1108 42L1114 52L1112 62L1120 68L1122 60L1130 56L1134 48L1142 42L1144 34L1136 32L1148 26L1144 20L1130 22L1120 30" />
      <path d="M1118 68L1128 66L1140 72L1150 78L1146 88L1138 96L1134 106L1126 98L1126 86L1116 78Z" />
      <path d="M1168 26L1158 32L1162 38L1154 44L1152 54L1160 60L1170 58L1172 72L1178 86L1184 84L1186 72L1192 66" />
      <path d="M1168 26L1176 30L1184 40L1190 52L1182 50L1176 40L1166 42" />
    </svg>
  );
}

function HierarchyIcon() {
  return (
    <svg width="12" height="12" viewBox="0 0 12 12" className="shrink-0" fill="none" stroke="#6b6b6b" aria-hidden="true">
      <path d="M6 0V10M1.5 9V4.5H10.5V9" />
      <path d="M0 9.5H2.5M5 9.5H7M9.5 9.5H12" strokeWidth="1.4" />
    </svg>
  );
}

function SigmaIcon() {
  return (
    <svg width="12" height="12" viewBox="0 0 12 12" className="shrink-0" fill="none" stroke="#5c5c5c" strokeWidth="1.3" aria-hidden="true">
      <path d="M10.5 3V1H2L6.5 6L2 11H10.5V9" />
    </svg>
  );
}

function Tool({ label, gap, children }) {
  return (
    <button type="button" aria-label={label} className={gap ? "ml-2 block h-5 w-6" : "block h-5 w-6"}>
      <svg viewBox="0 0 24 20" className="block h-5 w-6" fill="none" aria-hidden="true">
        {children}
      </svg>
    </button>
  );
}

function Modebar() {
  return (
    <div className="flex h-5 items-center pr-[11px]" role="toolbar" aria-label="Chart tools">
      <Tool label="Download image">
        <path d="M4 5.5H8L9.5 3.5H14.5L16 5.5H19.5V17H4Z" fill="#cbc6c6" />
        <circle cx="12" cy="11" r="3.4" stroke="#fff" strokeWidth="1.6" />
      </Tool>
      <Tool label="Pan" gap>
        <path d="M12 4V16M6 10H18" stroke="#cbc6c6" strokeWidth="1.5" />
        <path d="M12 2L14.5 5H9.5ZM12 18L14.5 15H9.5ZM4 10L7 7.5V12.5ZM20 10L17 7.5V12.5Z" fill="#cbc6c6" />
      </Tool>
      <Tool label="Box select">
        <path d="M4 3H20M4 17H20M5 6V16M19 6V16" stroke="#cbc6c6" strokeWidth="2" strokeDasharray="2 2" />
      </Tool>
      <Tool label="Lasso select">
        <g stroke="#787474" strokeWidth="1.5">
          <path d="M7 13C3 10 4 4 11 3C17 2.5 20 5 19.5 9C19 13 13 14.5 8 13" />
          <circle cx="8" cy="12" r="1.8" strokeWidth="1.2" />
          <path d="M8.5 14L7.5 17.5M9.5 13.5L11 14.5" strokeWidth="1.2" />
        </g>
      </Tool>
      <Tool label="Zoom in" gap>
        <path d="M5 3H19V17H5Z" fill="#cbc6c6" />
        <path d="M12 6.5V13.5M8.5 10H15.5" stroke="#fff" strokeWidth="2" />
      </Tool>
      <Tool label="Zoom out">
        <path d="M5 3H19V17H5Z" fill="#cbc6c6" />
        <path d="M8.5 10H15.5" stroke="#fff" strokeWidth="2" />
      </Tool>
      <Tool label="Reset">
        <g stroke="#cbc6c6" strokeWidth="1.4">
          <path d="M4.5 7V2.5H8M16 2.5H19.5V7M19.5 13V17.5H16M8 17.5H4.5V13" />
          <path d="M8 6L16 14M16 6L8 14" strokeWidth="1.2" />
          <path d="M8 8.5V6H10.5M13.5 6H16V8.5M16 11.5V14H13.5M10.5 14H8V11.5" strokeWidth="1.2" />
        </g>
      </Tool>
      <Tool label="Toggle hover" gap>
        <path d="M4 10L8 6H20V14H8Z" fill="#787474" />
      </Tool>
    </div>
  );
}

/* ---------- page ---------- */

const FIELDS = [
  ["Measures", true, "sigma"],
  ["Country", true, "dim"],
  ["Flag Codes", false, "dim"],
  ["Source Simulation", false, "dim"],
  ["Year", false, "dim"],
];

function FilterSection({ title }) {
  return (
    <section className="h-[83px] border-t border-[#e4e4e4] pt-1.5">
      <h2 className="text-xs leading-[18px] font-semibold text-[#555]">{title}</h2>
      <p className="mt-1.5 text-xs leading-[18px] text-[#c0c2c0]">No filters</p>
    </section>
  );
}

export default function App() {
  return (
    <div className="flex min-h-screen overflow-hidden bg-[#fafafa] font-['Open_Sans','Noto_Sans',sans-serif] text-xs text-[#5c5c5c]">
      <nav className="flex w-7 shrink-0 flex-col bg-[#001227]" aria-label="Sections">
        <button type="button" aria-label="Edit" className="flex h-[29px] items-center justify-center pr-1">
          <svg width="12" height="14" viewBox="0 0 12 14" fill="none" stroke="#b9bcc2" strokeWidth="1.1" aria-hidden="true">
            <path d="M2.5 7.5L8 1.5L10 3.5L4.5 9.5L2 10ZM0.5 12.5H11.5" />
          </svg>
        </button>
        <button type="button" aria-label="Filters" className="flex h-8 items-center justify-center bg-[#e6fbff] pr-1">
          <svg width="12" height="12" viewBox="0 0 12 12" fill="none" stroke="#5bc3ee" strokeWidth="1.3" aria-hidden="true">
            <path d="M1 1.5H11L8 6.5V10.5H4V6.5ZM4 7.5H8" />
          </svg>
        </button>
      </nav>

      <aside className="w-[212px] shrink-0 pt-[5px] pl-2" aria-label="Fields">
        <label className="flex h-[26px] w-[197px] items-center gap-1 rounded-xs border border-[#e0e0e0] bg-white pl-2">
          <svg width="12" height="12" viewBox="0 0 12 12" className="shrink-0" fill="none" stroke="#5c5c5c" strokeWidth="1.2" aria-hidden="true">
            <circle cx="4.8" cy="4.8" r="3.8" />
            <path d="M7.6 7.6L11.3 11.3" />
          </svg>
          <input
            type="text"
            aria-label="Search fields"
            placeholder="Search fields"
            className="w-full bg-transparent text-xs outline-none placeholder:text-[#5c5c5c]"
          />
        </label>
        <ul className="mt-[9px]">
          {FIELDS.map(([name, open, icon]) => (
            <li key={name} className="flex h-5 items-center">
              <span className="flex w-[15px] shrink-0">
                {open && (
                  <svg width="9" height="10" viewBox="0 0 9 10" fill="none" stroke="#5c5c5c" strokeWidth="1.2" aria-hidden="true">
                    <path d="M2 1L7 5L2 9" />
                  </svg>
                )}
              </span>
              {icon === "sigma" ? <SigmaIcon /> : <HierarchyIcon />}
              <span className="ml-[5px]">{name}</span>
            </li>
          ))}
        </ul>
      </aside>

      <aside className="w-[215px] shrink-0 pt-[13px] pl-[10px]" aria-label="Filters">
        <h2 className="text-xs leading-[18px] font-semibold text-[#555]">Green-growth filters by default</h2>
        <dl className="mt-[7px] flex w-[192px] flex-col gap-[3px]">
          {[["Year", "1990"], ["Source Simulation", "Base"]].map(([k, v]) => (
            <div key={k} className="flex h-6 items-center justify-between rounded-xs border border-[#e6e6e6] bg-[#f4f5f5] pr-1 pl-[10px]">
              <dt>{k}</dt>
              <dd>{v}</dd>
            </div>
          ))}
        </dl>
        <div className="mt-[27px] w-[196px]">
          <FilterSection title="Dashboard" />
          <FilterSection title="Page" />
          <FilterSection title="Widget" />
        </div>
      </aside>

      <main className="flex min-w-0 flex-1 flex-col border-l border-[#e8e8e8]">
        <div className="flex h-[46px] shrink-0 items-center pb-3 pl-[15px]" role="toolbar" aria-label="Widgets">
          <button type="button" aria-label="Table" className="mt-2"><TableIcon /></button>
          <button type="button" aria-label="Line chart" className="mt-2 ml-[35px]"><LinesIcon /></button>
          <button type="button" aria-label="Scatter chart" className="mt-2 ml-[35px]"><ScatterIcon /></button>
          <button type="button" aria-label="Number" className="mt-2 ml-10"><NumberIcon /></button>
          <span className="mt-2 ml-[41px] h-8 w-px bg-[#e4e4e4]" />
          <button type="button" aria-label="Map" className="mt-2 ml-[15px]"><GlobeIcon /></button>
        </div>

        <section className="relative h-[405px] shrink-0 overflow-hidden border-t-2 border-b border-l-2 border-t-[#6dcff0] border-b-[#cfcfcf] border-l-[#6dcff0] bg-[#fefefe]">
          <h2 className="h-9 pt-0.5 pl-[17px] text-[15px] leading-6 text-[#b9c0ba]">New map</h2>
          <div className="flex justify-end"><Modebar /></div>
          <div className="mt-2 flex">
            <div className="flex min-w-0 flex-1 justify-center pr-0.5"><WorldMap /></div>
            <ColorScale />
          </div>
          <span className="absolute bottom-0 left-0 h-px w-4 bg-[#6dcff0]" />
        </section>

        <div className="flex min-h-[403px] flex-1 bg-[#fefefe]">
          <section className="w-[calc(50%+3px)] shrink-0 border-r border-[#d4d4d4]">
            <h2 className="pt-1 pl-[19px] text-[15px] leading-6 text-[#606060]">Recent evolution of energy consumption per capita</h2>
            <div className="mt-[21px] flex pl-[74px]">
              <LineChart />
              <LineLegend />
            </div>
          </section>
          <section className="min-w-0 flex-1 overflow-hidden">
            <h2 className="pt-1 pl-[19px] text-[15px] leading-6 text-[#606060]">Correlations: GDP / Energy consumption / CO2 emissions</h2>
            <div className="mt-[21px] flex pl-[64px]">
              <BubbleChart />
              <BubbleLegend />
            </div>
          </section>
        </div>

        <footer className="flex h-[37px] shrink-0 items-start border-t border-[#d4d4d4] bg-[#fefefe] pl-4">
          <button type="button" className="-mt-px h-8 w-[67px] rounded-b-xs border border-t-0 border-[#d4d4d4] bg-[#fefefe] pt-0.5 text-[13px] text-[#5bc3ee]">Page 1</button>
          <button type="button" aria-label="Add page" className="-mt-px ml-0.5 flex h-8 w-10 items-center justify-center rounded-b-xs border border-[#d4d4d4] bg-[#f4f5f5]">
            <svg width="11" height="11" viewBox="0 0 11 11" stroke="#6b6b6b" strokeWidth="1.3" aria-hidden="true">
              <path d="M5.5 0V11M0 5.5H11" />
            </svg>
          </button>
          <label className="mt-3 mr-1 ml-auto flex h-4 items-center gap-2">
            <input type="checkbox" className="size-3.5 appearance-none rounded-xs border border-[#e0e0e0] bg-white" />
            Defer updates
          </label>
        </footer>
      </main>
    </div>
  );
}
